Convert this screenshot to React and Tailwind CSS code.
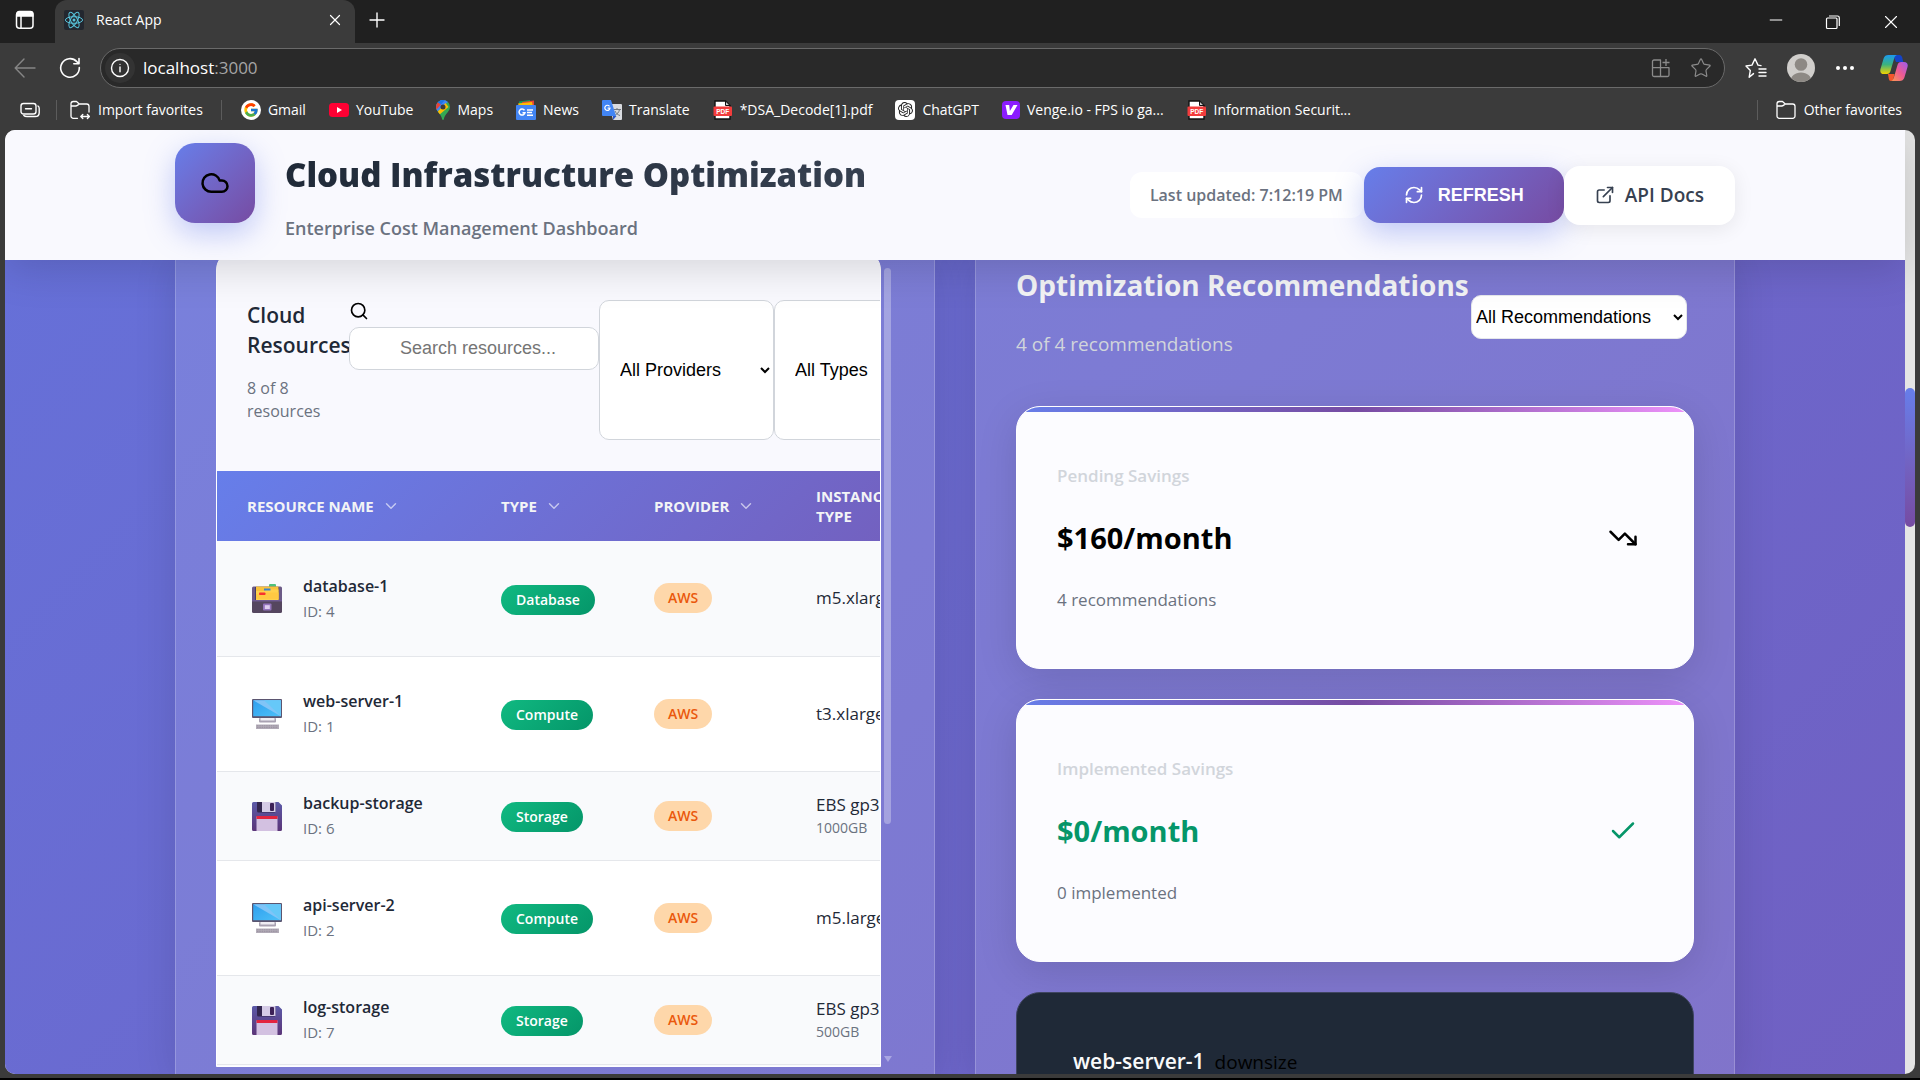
import React from "react";
import {
  Check,
  ChevronDown,
  Cloud,
  ExternalLink,
  Minus,
  Plus,
  RefreshCw,
  Search,
  Star,
  TrendingDown,
  X,
} from "lucide-react";
import { FcGoogle } from "react-icons/fc";
import { SiOpenai } from "react-icons/si";

/* ---------- Browser icons ---------- */

function TabPanelIcon() {
  return (
    <svg viewBox="0 0 20 20" className="size-5" fill="none" stroke="#fff" strokeWidth="1.5">
      <rect x="1.5" y="1.8" width="16.5" height="16.5" rx="3" />
      <path d="M1.8 5 V4 a2.4 2.4 0 0 1 2.4-2.4 H15.4 a2.4 2.4 0 0 1 2.4 2.4 V6 H1.8Z" fill="#fff" />
      <path d="M6 6v12" />
    </svg>
  );
}

function ReactIcon() {
  return (
    <svg viewBox="0 0 20 20" className="size-5" fill="none" stroke="#58c4dc" strokeWidth="1">
      <rect width="20" height="20" rx="2" fill="#23272f" stroke="none" />
      <ellipse cx="10" cy="10" rx="8.6" ry="3.3" />
      <ellipse cx="10" cy="10" rx="8.6" ry="3.3" transform="rotate(60 10 10)" />
      <ellipse cx="10" cy="10" rx="8.6" ry="3.3" transform="rotate(120 10 10)" />
      <circle cx="10" cy="10" r="1.5" fill="#58c4dc" stroke="none" />
    </svg>
  );
}

function BackIcon() {
  return (
    <svg viewBox="0 0 22 22" className="size-[22px]" fill="none" stroke="#868686" strokeWidth="1.4" strokeLinecap="round" strokeLinejoin="round">
      <path d="M21 11H1.5M10 2 1.2 11 10 20" />
    </svg>
  );
}

function ReloadIcon() {
  return (
    <svg viewBox="0 0 22 22" className="size-[22px]" fill="none" stroke="#fff" strokeWidth="1.6" strokeLinecap="round" strokeLinejoin="round">
      <path d="M20.3 10.6A9.3 9.3 0 1 1 17.8 4.6l1.9 1.9M20 1.5v5.2h-5.2" />
    </svg>
  );
}

function InfoIcon() {
  return (
    <svg viewBox="0 0 20 20" className="size-5" fill="none" stroke="#fff" strokeWidth="1.4" strokeLinecap="round">
      <circle cx="10" cy="10" r="8.5" />
      <path d="M10 9v4.8" />
      <circle cx="10" cy="6.4" r="0.6" fill="#fff" stroke="none" />
    </svg>
  );
}

function AppsIcon() {
  return (
    <svg viewBox="0 0 20 20" className="size-5" fill="none" stroke="#8b8b8b" strokeWidth="1.3" strokeLinejoin="round">
      <path d="M9.5 9.7V2H3a1.5 1.500 0 0 0-1.500 1.500v6.200ZM1.500 9.700V17A1.500 1.500 0 0 0 3 18.500h6.500V9.700ZM9.500 9.700V18.500h7A1.500 1.500 0 0 0 18 17v-7.300Z" />
      <path d="M15 1v7M11.500 4.500h7" />
    </svg>
  );
}

function FavoritesIcon() {
  return (
    <svg viewBox="0 0 22 22" className="size-[22px]" fill="none" stroke="#fff" strokeWidth="1.4" strokeLinecap="round" strokeLinejoin="round">
      <path d="M8.500 16.600 4.200 20.200l1.100-6.600L1 9l6-.9L10 1.800l3 6.300 3 .5M14 12h7M14 15.500h7M14 19h7" />
    </svg>
  );
}

function AvatarIcon() {
  return (
    <svg viewBox="0 0 28 28" className="size-7">
      <clipPath id="avatar-clip">
        <circle cx="14" cy="14" r="14" />
      </clipPath>
      <g clipPath="url(#avatar-clip)">
        <rect width="28" height="28" fill="#d0cecb" />
        <circle cx="14" cy="10.500" r="6.300" fill="#8d8984" />
        <path d="M3.500 28c0-6 4.500-9.500 10.500-9.500S24.500 22 24.500 28Z" fill="#8d8984" />
      </g>
    </svg>
  );
}

function CopilotIcon() {
  return (
    <svg viewBox="0 0 28 28" className="size-7">
      <defs>
        <linearGradient id="cp-a" x1="0" y1="0" x2="0" y2="1">
          <stop offset="0" stopColor="#1b9af0" />
          <stop offset=".5" stopColor="#3bb27f" />
          <stop offset="1" stopColor="#f3d400" />
        </linearGradient>
        <linearGradient id="cp-b" x1="1" y1="0" x2="0" y2="1">
          <stop offset="0" stopColor="#9a5cf0" />
          <stop offset=".5" stopColor="#ee5a94" />
          <stop offset="1" stopColor="#fd9a4f" />
        </linearGradient>
      </defs>
      <path d="M13 1h6.500c1.500 0 2.200 1 2.600 2.300L23.300 8H16Z" fill="#1443c8" />
      <path d="M8 20h6.500l-1 4.500c-.4 1.600-1 2.500-2.500 2.500-1.500 0-1.800-1-2.200-2.300Z" fill="#f5562b" />
      <path d="M8.500 1H17c-1.600.4-2.300 1.600-2.800 3.200L10.500 17c-.6 2-1.600 3-3.700 3H4c-3 0-4.300-2-3.500-5L3.600 4.500C4.400 2 6 1 8.500 1Z" fill="url(#cp-a)" />
      <path d="M19.500 27H11c1.600-.4 2.300-1.600 2.800-3.200L17.500 11c.6-2 1.600-3 3.700-3H24c3 0 4.300 2 3.500 5l-3.100 10.500C23.600 26 22 27 19.500 27Z" fill="url(#cp-b)" />
    </svg>
  );
}

function StackIcon() {
  return (
    <svg viewBox="0 0 20 20" className="size-5" fill="none" stroke="#fff" strokeWidth="1.400" strokeLinecap="round">
      <rect x="1" y="3.500" width="15" height="10.500" rx="2.500" />
      <path d="M5.500 8.700h6M18 6c.8.600 1.200 1.400 1.200 2.500v4.200c0 2.300-1.600 3.800-4 3.800H7c-1.500 0-2.500-.3-3.200-1" />
    </svg>
  );
}

function FolderIcon({ arrows }) {
  return (
    <svg viewBox="0 0 20 20" className="size-5" fill="none" stroke="#fff" strokeWidth="1.300" strokeLinecap="round" strokeLinejoin="round">
      {arrows ? (
        <>
          <path d="M7.500 18.300H3.300A2.300 2.300 0 0 1 1 16V3.800A2.300 2.300 0 0 1 3.300 1.500h3.200L9.300 4h7.400A2.300 2.300 0 0 1 19 6.300V12M1 6h4.800c1 0 1.500-.6 3.500-2" />
          <path d="M11 16.500h8M12.800 14.500l-2 2 2 2M17.400 14.500l2 2-2 2" />
        </>
      ) : (
        <path d="M1 3.800A2.300 2.300 0 0 1 3.300 1.500h3.200L9.300 4h7.400A2.300 2.300 0 0 1 19 6.300V16a2.300 2.300 0 0 1-2.300 2.300H3.300A2.300 2.300 0 0 1 1 16ZM1 6h4.800c1 0 1.500-.6 3.500-2" />
      )}
    </svg>
  );
}

function GmailGoogleIcon() {
  return (
    <span className="flex size-5 items-center justify-center rounded-full bg-white">
      <FcGoogle className="size-4" />
    </span>
  );
}

function YouTubeIcon() {
  return (
    <svg viewBox="0 0 20 20" className="size-5">
      <rect y="3" width="20" height="14" rx="3.500" fill="#ff0033" />
      <path d="M8 7v6l5-3Z" fill="#fff" />
    </svg>
  );
}

function MapsIcon() {
  return (
    <svg viewBox="0 0 14 20" className="h-5 w-[14px]">
      <clipPath id="pin-clip">
        <path d="M7 0a7 7 0 0 1 7 7c0 4.500-5 6.500-6.200 12.200a.8.8 0 0 1-1.600 0C5 13.500 0 11.500 0 7a7 7 0 0 1 7-7Z" />
      </clipPath>
      <g clipPath="url(#pin-clip)">
        <rect width="14" height="20" fill="#34a853" />
        <path d="M0 13 14 0H0Z" fill="#4285f4" />
        <path d="M-1 11 5 4.500 1.500 2-2 6Z" fill="#ea4335" />
        <path d="M0 13.500 9.500 3l3 4L3 15Z" fill="#fbbc04" />
        <path d="M5 4.500 9 0H4L1.500 2Z" fill="#1a73e8" />
      </g>
      <circle cx="7" cy="7" r="2.500" fill="#3b3b3b" />
    </svg>
  );
}

function NewsIcon() {
  return (
    <svg viewBox="0 0 20 20" className="size-5">
      <path d="M3 5V1.500L14 0l1 5Z" fill="#0f9d58" />
      <path d="m6 2 12-1.500V6H7Z" fill="#ea4335" />
      <path d="M2 3.500 16 2l1 5H3Z" fill="#fbbc04" />
      <rect y="5" width="20" height="15" rx="1" fill="#4285f4" />
      <path d="M8.500 10.300A3 3 0 1 0 9 12.700H6.500M11 10h6M11 12.600h5M11 15.200h6" fill="none" stroke="#fff" strokeWidth="1.500" />
    </svg>
  );
}

function TranslateIcon() {
  return (
    <svg viewBox="0 0 20 20" className="size-5">
      <path d="M7 4h12a1 1 0 0 1 1 1v14a1 1 0 0 1-1 1h-8Z" fill="#d9dbdf" />
      <path d="M11.500 9.500H19M15 8v1.500M17.500 9.500c-.5 3-2.500 4.700-5 6M13 11c.8 2 2.500 3.600 5 4.600" fill="none" stroke="#6f7780" strokeWidth="1" />
      <path d="M11 20v-4h3.500Z" fill="#2a56c6" />
      <path d="M1 0h8l5 16H1a1 1 0 0 1-1-1V1a1 1 0 0 1 1-1Z" fill="#4285f4" />
      <path d="M7.500 6.300A2.600 2.600 0 1 0 8 8.200H5.600" fill="none" stroke="#fff" strokeWidth="1.200" />
    </svg>
  );
}

function PdfIcon() {
  return (
    <svg viewBox="0 0 20 20" className="size-5">
      <path d="M2 1h10.500L17 5.500V19H2Z" fill="#fff" stroke="#111" strokeWidth="1.400" />
      <path d="M12.500 1v4.500H17Z" fill="#ccc" stroke="#111" />
      <rect x="0.500" y="6.500" width="18.500" height="9.500" rx="1" fill="#f23c3c" />
      <text x="9.700" y="13.800" textAnchor="middle" fontSize="6.500" fontWeight="800" fill="#fff" fontFamily="Liberation Sans, sans-serif">
        PDF
      </text>
    </svg>
  );
}

function ChatGptIcon() {
  return (
    <span className="flex size-5 items-center justify-center rounded bg-white">
      <SiOpenai className="size-[15px] text-[#222]" />
    </span>
  );
}

function VengeIcon() {
  return (
    <span className="flex size-[18px] items-center justify-center rounded-sm bg-[#8b1cff]">
      <svg viewBox="0 0 18 18" className="size-[18px]">
        <path d="M3.500 4h3.700l.7 6L11.500 4h4L9.700 14H5.500Z" fill="#fff" />
      </svg>
    </span>
  );
}

/* ---------- Resource icons ---------- */

function DatabaseGlyph() {
  return (
    <svg viewBox="0 0 30 30" className="size-[30px]">
      <rect x="17" y="1" width="7" height="4" rx="1" fill="#4fc27c" />
      <path d="M0 5a1.500 1.500 0 0 1 1.500-1.500h27A1.500 1.500 0 0 1 30 5v13H0Z" fill="#6c5a86" />
      <rect x="3" y="4" width="24" height="14" fill="#433b6b" />
      <path d="M4 3.500h22.500V17H4Z" fill="#f9c23c" />
      <path d="M4 8h9l1.500-1.500h12V17H4Z" fill="#ffd14d" />
      <rect x="12" y="5.500" width="6.500" height="2" fill="#3f83c8" />
      <path d="M4 11h9l1.500-1.500h12V16H4Z" fill="#ffc943" />
      <rect x="7" y="9.500" width="6.500" height="2.500" rx=".8" fill="#f8312f" />
      <path d="M0 17h30v11.500A1.500 1.500 0 0 1 28.500 30h-27A1.500 1.500 0 0 1 0 28.500Z" fill="#55465f" />
      <path d="M0 17h30v1.500H0Z" fill="#6f5b93" />
      <rect x="11" y="20.500" width="8.500" height="7" rx="1" fill="#9474bd" />
      <rect x="12.800" y="22.200" width="5" height="3.800" fill="#e0cff2" />
    </svg>
  );
}

function ComputeGlyph() {
  return (
    <svg viewBox="0 0 30 30" className="size-[30px]">
      <defs>
        <linearGradient id="screen" x1="0" y1="0" x2="1" y2="1">
          <stop offset="0" stopColor="#2f9fee" />
          <stop offset="1" stopColor="#4cc0f8" />
        </linearGradient>
      </defs>
      <rect y="0" width="30" height="19" rx="1" fill="#5b5570" />
      <rect x="1.200" y="1.200" width="27.600" height="16" fill="url(#screen)" />
      <path d="M1.200 1.200h27.600v16Z" fill="#80c4f7" />
      <path d="M12 1.200h16.800v16Z" fill="#66c8f8" />
      <rect x="7" y="19" width="17" height="4.500" rx="1" fill="#a9a2b2" />
      <rect x="8.500" y="19" width="14" height="2.500" fill="#efedf3" />
      <path d="M4 25.500h23V30H4Z" fill="#b3acb8" />
      <path d="M5 26.800h21M5 28.600h21" stroke="#938c9b" strokeWidth=".8" strokeDasharray="1.500 .8" />
    </svg>
  );
}

function StorageGlyph() {
  return (
    <svg viewBox="0 0 30 30" className="size-[30px]">
      <defs>
        <linearGradient id="floppy" x1="0" y1="0" x2="0" y2="1">
          <stop offset="0" stopColor="#5c5aa8" />
          <stop offset="1" stopColor="#5b3578" />
        </linearGradient>
      </defs>
      <path d="M1.500 1h25L30 4.500v24A1.500 1.500 0 0 1 28.500 30h-27A1.500 1.500 0 0 1 0 28.500v-26A1.500 1.500 0 0 1 1.500 1Z" fill="url(#floppy)" />
      <path d="M5 1h18.500v9a1.500 1.500 0 0 1-1.500 1.500H6.500A1.500 1.500 0 0 1 5 10Z" fill="#33264f" />
      <path d="M10 1h13.500v10H10Z" fill="#d5cbe6" />
      <rect x="18" y="2" width="4" height="8" rx="1" fill="#3c2157" />
      <path d="M4.500 15.500h21V30h-21Z" fill="#d3c1e1" />
      <path d="M4.500 15h21v3h-21Z" fill="#e3243f" />
    </svg>
  );
}

const glyphs = { Database: DatabaseGlyph, Compute: ComputeGlyph, Storage: StorageGlyph };

/* ---------- Data ---------- */

const bookmarks = [
  { label: "Gmail", Icon: GmailGoogleIcon },
  { label: "YouTube", Icon: YouTubeIcon },
  { label: "Maps", Icon: MapsIcon },
  { label: "News", Icon: NewsIcon },
  { label: "Translate", Icon: TranslateIcon },
  { label: "*DSA_Decode[1].pdf", Icon: PdfIcon },
  { label: "ChatGPT", Icon: ChatGptIcon },
  { label: "Venge.io - FPS io ga...", Icon: VengeIcon },
  { label: "Information Securit...", Icon: PdfIcon },
];

const resources = [
  { name: "database-1", id: 4, type: "Database", provider: "AWS", instance: "m5.xlarge" },
  { name: "web-server-1", id: 1, type: "Compute", provider: "AWS", instance: "t3.xlarge" },
  { name: "backup-storage", id: 6, type: "Storage", provider: "AWS", instance: "EBS gp3", size: "1000GB" },
  { name: "api-server-2", id: 2, type: "Compute", provider: "AWS", instance: "m5.large" },
  { name: "log-storage", id: 7, type: "Storage", provider: "AWS", instance: "EBS gp3", size: "500GB" },
];

/* ---------- Browser chrome ---------- */

function TabStrip() {
  return (
    <div className="flex h-[43px] shrink-0 items-center bg-[#202020]">
      <button aria-label="Tab actions" className="flex w-[55px] shrink-0 justify-center pr-1.5 pb-1">
        <TabPanelIcon />
      </button>
      <div className="flex h-full w-[300px] items-center rounded-t-xl bg-[#3b3b3b] pr-[11px] pb-1 pl-[9px]">
        <ReactIcon />
        <span className="ml-3 flex-1 text-[14px] text-white">React App</span>
        <button aria-label="Close tab">
          <X className="size-[18px] text-white" strokeWidth={1.6} />
        </button>
      </div>
      <button aria-label="New tab" className="ml-2.5 pb-1">
        <Plus className="size-6 text-white" strokeWidth={1.4} />
      </button>
      <div className="ml-auto flex items-center gap-[37px] pr-[18px] text-white">
        <button aria-label="Minimize" className="pb-1">
          <Minus className="size-5" strokeWidth={1.2} />
        </button>
        <button aria-label="Restore">
          <svg viewBox="0 0 20 20" className="size-5" fill="none" stroke="currentColor" strokeWidth="1.2">
            <rect x="3.500" y="6" width="10.500" height="10.500" rx="1" />
            <path d="M6 4h8.500A1.800 1.800 0 0 1 16.300 5.800V14" />
          </svg>
        </button>
        <button aria-label="Close window">
          <X className="size-[22px]" strokeWidth={1.2} />
        </button>
      </div>
    </div>
  );
}

function Toolbar() {
  return (
    <div className="flex h-[50px] shrink-0 items-center">
      <button aria-label="Back" className="ml-3.5">
        <BackIcon />
      </button>
      <button aria-label="Reload" className="mr-[19px] ml-[23px]">
        <ReloadIcon />
      </button>
      <div className="flex h-10 flex-1 items-center rounded-full border border-[#6a6a6a] bg-[#292929] pr-3 pl-1">
        <button aria-label="Site information" className="flex size-[30px] items-center justify-center rounded-full bg-[#333]">
          <InfoIcon />
        </button>
        <div role="textbox" aria-label="Address" className="ml-2 flex-1 text-[17px] text-white">
          localhost<span className="text-[#a5a5a5]">:3000</span>
        </div>
        <button aria-label="Apps" className="mr-[19px]">
          <AppsIcon />
        </button>
        <button aria-label="Add to favorites">
          <Star className="size-[22px] text-[#8b8b8b]" strokeWidth={1.3} />
        </button>
      </div>
      <button aria-label="Favorites" className="ml-5">
        <FavoritesIcon />
      </button>
      <button aria-label="Profile" className="ml-5">
        <AvatarIcon />
      </button>
      <button aria-label="Settings" className="ml-[21px] flex gap-[3px]">
        <span className="size-1 rounded-full bg-white" />
        <span className="size-1 rounded-full bg-white" />
        <span className="size-1 rounded-full bg-white" />
      </button>
      <button aria-label="Copilot" className="mr-3 ml-[26px]">
        <CopilotIcon />
      </button>
    </div>
  );
}

function BookmarksBar() {
  return (
    <nav aria-label="Favorites bar" className="flex h-[37px] shrink-0 items-center pb-1 text-[14px] whitespace-nowrap text-white">
      <button aria-label="Workspaces" className="mr-4 ml-5">
        <StackIcon />
      </button>
      <span className="h-5 w-px bg-[#5c5c5c]" />
      <a href="#import" className="ml-[13px] flex items-center gap-2">
        <FolderIcon arrows />
        Import favorites
      </a>
      <span className="mr-[19px] ml-[18px] h-5 w-px bg-[#5c5c5c]" />
      <div className="flex items-center gap-[23px]">
        {bookmarks.map(({ label, Icon }) => (
          <a key={label} href="#bookmark" className="flex items-center gap-[7px]">
            <Icon />
            {label}
          </a>
        ))}
      </div>
      <span className="ml-auto h-5 w-px bg-[#5c5c5c]" />
      <a href="#other" className="mr-[18px] ml-[18px] flex items-center gap-2">
        <FolderIcon />
        Other favorites
      </a>
    </nav>
  );
}

/* ---------- Dashboard ---------- */

function DashboardHeader() {
  return (
    <header className="relative z-10 flex h-[130px] shrink-0 justify-center bg-[#f9f9fe] shadow-[0_8px_40px_rgba(0,0,0,0.15)]">
      <div className="flex w-full max-w-[1560px] justify-between">
        <div className="flex gap-[30px] pt-[13px]">
          <div className="flex size-20 shrink-0 items-center justify-center rounded-[20px] bg-linear-135 from-[#667eea] to-[#764ba2] shadow-[0_10px_30px_rgba(102,126,234,0.4)]">
            <Cloud className="size-[30px] text-black" strokeWidth={2} />
          </div>
          <div>
            <h1 className="mt-1 bg-linear-135 from-[#1f2937] to-[#374151] bg-clip-text text-[33px] leading-[56px] font-extrabold text-transparent">
              Cloud Infrastructure Optimization
            </h1>
            <p className="mt-2.5 text-[18px] leading-[30px] font-semibold text-[#6b7280]">Enterprise Cost Management Dashboard</p>
          </div>
        </div>
        <div className="flex items-center">
          <div className="mr-px rounded-xl bg-white px-5 py-[9px] text-[16px] leading-7 font-semibold text-[#6b7280]">
            Last updated: 7:12:19 PM
          </div>
          <button className="flex h-14 items-center gap-3.5 rounded-2xl bg-linear-135 from-[#667eea] to-[#764ba2] px-10 font-['Liberation_Sans',sans-serif] text-[18px] font-bold text-white shadow-[0_10px_30px_rgba(102,126,234,0.4)]">
            <RefreshCw className="size-5" strokeWidth={2} />
            REFRESH
          </button>
          <a
            href="#docs"
            className="flex h-[59px] items-center gap-2.5 rounded-2xl bg-white px-[31px] text-[19px] font-semibold text-[#374151] shadow-[0_4px_20px_rgba(0,0,0,0.08)]"
          >
            <ExternalLink className="size-5" strokeWidth={2} />
            API Docs
          </a>
        </div>
      </div>
    </header>
  );
}

const th = "px-[30px] text-left text-[15px] leading-5 font-bold text-[#f3f4f6]";

function SortHead({ children }) {
  return (
    <button className="flex items-center gap-2">
      {children}
      <ChevronDown className="size-[18px] text-white/60" strokeWidth={2} />
    </button>
  );
}

function ResourceRow({ item, striped }) {
  const Glyph = glyphs[item.type];
  return (
    <tr className={`border-b border-[#e5e7eb] ${item.size ? "h-[89px]" : "h-[115px]"} ${striped ? "bg-[#f9fafc]" : "bg-white"}`}>
      <td className="px-[30px]">
        <div className="flex items-center gap-[21px] pl-[5px]">
          <Glyph />
          <div>
            <div className="text-[16px] leading-[26px] font-semibold text-[#1f2937]">{item.name}</div>
            <div className="text-[15px] leading-[25px] text-[#6b7280]">ID: {item.id}</div>
          </div>
        </div>
      </td>
      <td className="px-[30px] pt-[3px]">
        <span className="inline-block rounded-full bg-linear-135 from-[#10b981] to-[#059669] px-[15px] text-[14px] leading-[30px] font-semibold text-white">
          {item.type}
        </span>
      </td>
      <td className="px-[30px]">
        <span className="inline-block rounded-full bg-[#fed7aa] px-[14px] text-[14px] leading-[30px] font-semibold text-[#ea580c]">
          {item.provider}
        </span>
      </td>
      <td className="px-[30px] whitespace-nowrap">
        <div className="text-[17px] leading-6 text-[#1f2937]">{item.instance}</div>
        {item.size && <div className="text-[14px] leading-[22px] text-[#6b7280]">{item.size}</div>}
      </td>
    </tr>
  );
}

function ResourcesPanel() {
  return (
    <section className="flex min-w-0 flex-1 border-x border-white/20 bg-white/12 px-10 shadow-[0_8px_40px_rgba(0,0,0,0.12)]">
      <div className="mb-[7px] min-w-0 flex-1 overflow-hidden rounded-t-[20px] border border-white bg-[#f9f9fe]">
        <div className="flex px-[30px] pt-[49px] pb-[31px]">
          <div className="w-[102px] shrink-0">
            <h2 className="text-[21px] leading-[30px] font-semibold text-[#1f2937]">Cloud Resources</h2>
            <p className="mt-[17px] text-[16px] leading-[23px] text-[#6b7280]">8 of 8 resources</p>
          </div>
          <div className="shrink-0 pt-px">
            <Search className="mb-1 size-5 text-black" strokeWidth={2} />
            <input
              type="text"
              aria-label="Search resources"
              placeholder="Search resources..."
              className="mt-0.5 h-[43px] w-[250px] rounded-[10px] border border-[#d1d5db] bg-white pl-[50px] font-['Liberation_Sans',sans-serif] text-[18px] placeholder:text-[#757575]"
            />
          </div>
          <select
            aria-label="Provider"
            className="h-[140px] w-[175px] shrink-0 rounded-[10px] border border-[#d1d5db] bg-white px-4 font-['Liberation_Sans',sans-serif] text-[18px] text-black"
          >
            <option>All Providers</option>
          </select>
          <select
            aria-label="Type"
            className="h-[140px] w-[175px] shrink-0 rounded-[10px] border border-[#d1d5db] bg-white px-4 font-['Liberation_Sans',sans-serif] text-[18px] text-black"
          >
            <option>All Types</option>
          </select>
        </div>
        <table className="w-[1200px] table-fixed border-collapse">
          <colgroup>
            <col className="w-[254px]" />
            <col className="w-[153px]" />
            <col className="w-[162px]" />
            <col />
          </colgroup>
          <thead>
            <tr className="h-[70px] bg-linear-135 from-[#667eea] to-[#764ba2]">
              <th className={th}>
                <SortHead>RESOURCE NAME</SortHead>
              </th>
              <th className={th}>
                <SortHead>TYPE</SortHead>
              </th>
              <th className={th}>
                <SortHead>PROVIDER</SortHead>
              </th>
              <th className={th}>
                INSTANCE
                <br />
                TYPE
              </th>
            </tr>
          </thead>
          <tbody>
            {resources.map((item, i) => (
              <ResourceRow key={item.id} item={item} striped={i % 2 === 0} />
            ))}
          </tbody>
        </table>
      </div>
      <div aria-hidden="true" className="flex w-[13px] flex-col items-center">
        <div className="mt-[18px] h-[556px] w-[7px] rounded-full bg-white/30" />
        <svg viewBox="0 0 8 6" className="mt-auto mb-3 h-1.5 w-2">
          <path d="M0 0h8L4 6Z" fill="#a9a6e2" />
        </svg>
      </div>
    </section>
  );
}

function SavingsCard({ title, amount, note, children, green }) {
  return (
    <article className="h-[263px] overflow-hidden rounded-3xl border border-white bg-[#fcfcff] shadow-[0_10px_40px_rgba(0,0,0,0.12)]">
      <div className="h-[5px] bg-linear-to-r from-[#667eea] via-[#764ba2] to-[#f093fb]" />
      <div className="flex items-center justify-between pt-[50px] pr-[55px] pl-10">
        <div>
          <h3 className="text-[17px] leading-7 font-semibold text-[#d1d5db]">{title}</h3>
          <p className={`my-7 text-[29px] leading-10 font-bold ${green ? "text-[#059669]" : "text-black"}`}>{amount}</p>
          <p className="text-[17px] leading-7 text-[#6b7280]">{note}</p>
        </div>
        {children}
      </div>
    </article>
  );
}

function RecommendationsPanel() {
  return (
    <section className="min-w-0 flex-1 border-x border-white/20 bg-white/12 px-10 shadow-[0_8px_40px_rgba(0,0,0,0.12)]">
      <div className="mb-[30px] flex h-[126px] items-start justify-between pt-3.5 pr-[7px]">
        <div>
          <h2 className="text-[28px] leading-[42px] font-bold whitespace-nowrap text-[#f3f4f6]">Optimization Recommendations</h2>
          <p className="mt-[21px] text-[19px] leading-[34px] text-[#d1d5db]">4 of 4 recommendations</p>
        </div>
        <select
          aria-label="Recommendation filter"
          className="mt-[31px] h-11 w-[216px] shrink-0 rounded-[10px] border border-[#e5e7eb] bg-white font-['Liberation_Sans',sans-serif] text-[18px] text-black"
        >
          <option>All Recommendations</option>
        </select>
      </div>
      <div className="flex flex-col gap-[30px]">
        <SavingsCard title="Pending Savings" amount="$160/month" note="4 recommendations">
          <TrendingDown className="size-[30px] text-black" strokeWidth={2} />
        </SavingsCard>
        <SavingsCard title="Implemented Savings" amount="$0/month" note="0 implemented" green>
          <Check className="size-[30px] text-[#059669]" strokeWidth={2} />
        </SavingsCard>
        <article className="flex h-[263px] items-start gap-2.5 rounded-3xl border border-[#3f4560] bg-[#1f2937] px-14 pt-[51px]">
          <h3 className="text-[21px] leading-[34px] font-semibold text-[#f9fafb]">web-server-1</h3>
          <span className="text-[19px] leading-[36px] text-black">downsize</span>
        </article>
      </div>
    </section>
  );
}

export default function App() {
  return (
    <div className="flex h-screen flex-col overflow-hidden border-b-2 border-black bg-[#3b3b3b] font-['Open_Sans','Noto_Sans',sans-serif]">
      <TabStrip />
      <Toolbar />
      <BookmarksBar />
      <div className="mx-[5px] mb-1 flex min-h-0 flex-1 overflow-hidden rounded-[10px] bg-[#e5e5e5]">
        <div className="flex min-w-0 flex-1 flex-col">
          <DashboardHeader />
          <main className="flex min-h-0 flex-1 justify-center overflow-hidden bg-linear-135 from-[#6670d8] to-[#7060c2]">
            <div className="-mt-[10px] flex w-full max-w-[1560px] gap-10">
              <ResourcesPanel />
              <RecommendationsPanel />
            </div>
          </main>
        </div>
        <div aria-hidden="true" className="w-2.5 shrink-0 pt-[258px]">
          <div className="h-[139px] rounded-full bg-linear-to-b from-[#667eea] to-[#764ba2]" />
        </div>
      </div>
    </div>
  );
}
